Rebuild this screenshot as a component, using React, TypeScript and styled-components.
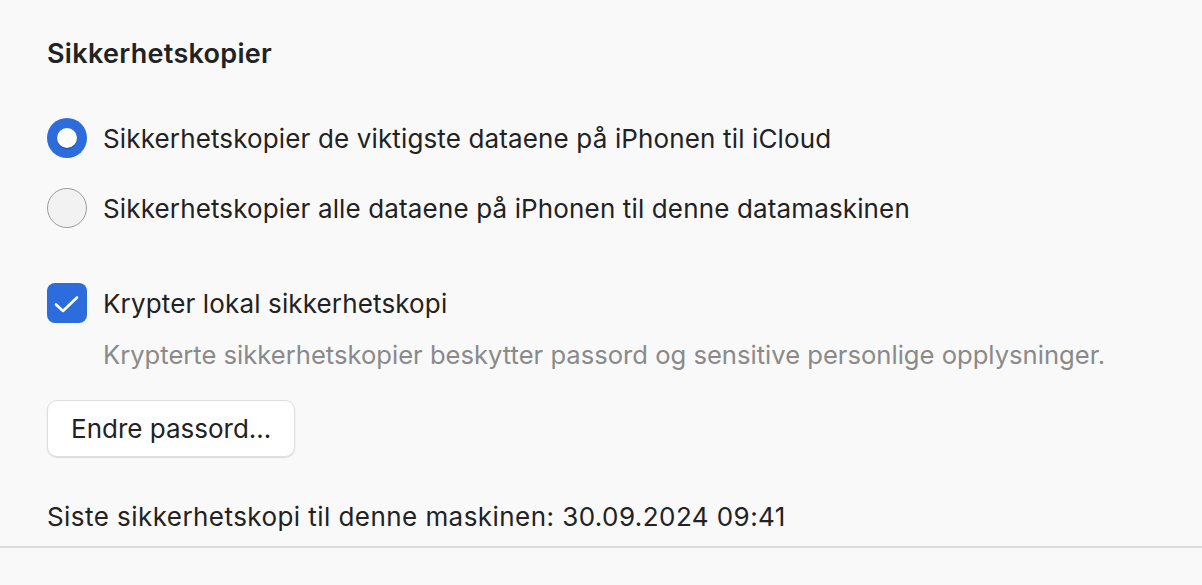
import React, {useState} from 'react';
import styled, {createGlobalStyle} from 'styled-components';

const GlobalStyle = createGlobalStyle`
  html, body {
    margin: 0;
    padding: 0;
    background: #f9f9f9;
  }
  * {
    box-sizing: border-box;
  }
`

const Page = styled.div`
  min-height: 585px;
  background: #f9f9f9;
  font-family: Inter, "Noto Sans", "Liberation Sans", sans-serif;
  color: #222222;
  display: flex;
  flex-direction: column;
`

const Section = styled.section`
  display: flex;
  flex-direction: column;
  align-items: flex-start;
  padding: 39px 47px 0;
`

const Title = styled.h2`
  margin: 0;
  font-size: 27px;
  line-height: 30px;
  font-weight: 600;
  letter-spacing: 0.3px;
`

const RadioGroup = styled.div`
  display: flex;
  flex-direction: column;
  gap: 30px;
  margin-top: 49px;
`

const OptionRow = styled.label`
  display: flex;
  align-items: center;
  gap: 16px;
  height: 40px;
  font-size: 26px;
  letter-spacing: 0.14px;
  cursor: pointer;
`

const RadioDot = styled.span<{checked: boolean}>`
  flex: none;
  width: 40px;
  height: 40px;
  border-radius: 50%;
  display: flex;
  align-items: center;
  justify-content: center;
  background: ${props => props.checked ? '#2c6cdc' : '#f2f2f2'};
  border: ${props => props.checked ? 'none' : '1.5px solid #9c9c9c'};

  &::after {
    content: '';
    width: 20px;
    height: 20px;
    border-radius: 50%;
    background: #fff;
    box-shadow: 0 1px 1px rgba(0, 0, 0, 0.35);
    display: ${props => props.checked ? 'block' : 'none'};
  }
`

const CheckRow = styled(OptionRow)`
  margin-top: 55px;
`

const CheckBox = styled.span<{checked: boolean}>`
  flex: none;
  width: 40px;
  height: 40px;
  border-radius: 8px;
  display: flex;
  align-items: center;
  justify-content: center;
  background: ${props => props.checked ? '#2c6cdc' : '#f2f2f2'};
  border: ${props => props.checked ? 'none' : '1.5px solid #9c9c9c'};
`

const Hint = styled.p`
  margin: 17px 0 0 56px;
  font-size: 25.6px;
  line-height: 30px;
  color: #8a8a8a;
`

const Button = styled.button`
  margin-top: 30px;
  height: 57px;
  padding: 0 23px;
  font-family: inherit;
  font-size: 26px;
  color: #222222;
  background: #ffffff;
  border: 1px solid #dedede;
  border-radius: 10px;
  box-shadow: 0 1px 1.5px rgba(0, 0, 0, 0.12);
  cursor: pointer;
`

const Footer = styled.p`
  margin: 45px 0 0;
  font-size: 26px;
  line-height: 30px;
  letter-spacing: 0.44px;
`

const Divider = styled.hr`
  margin: 14px 0 0;
  border: none;
  height: 2px;
  background: #dadada;
`

const options = [
  'Sikkerhetskopier de viktigste dataene på iPhonen til iCloud',
  'Sikkerhetskopier alle dataene på iPhonen til denne datamaskinen',
]

const App = () => {
  const [selected, setSelected] = useState(0)
  const [encrypt, setEncrypt] = useState(true)

  return (
    <>
      <GlobalStyle />
      <Page>
        <Section>
          <Title>Sikkerhetskopier</Title>
          <RadioGroup>
            {options.map((text, i) => (
              <OptionRow key={text} onClick={() => setSelected(i)}>
                <RadioDot checked={selected === i} />
                {text}
              </OptionRow>
            ))}
          </RadioGroup>
          <CheckRow onClick={() => setEncrypt(prev => !prev)}>
            <CheckBox checked={encrypt}>
              {encrypt && (
                <svg width="39" height="39" viewBox="0 0 39 39">
                  <path d="M8 20.5 L15 27 L29 13.5" fill="none" stroke="#fff" strokeWidth="2.6" strokeLinecap="round" strokeLinejoin="round" />
                </svg>
              )}
            </CheckBox>
            Krypter lokal sikkerhetskopi
          </CheckRow>
          <Hint>Krypterte sikkerhetskopier beskytter passord og sensitive personlige opplysninger.</Hint>
          <Button>Endre passord...</Button>
          <Footer>Siste sikkerhetskopi til denne maskinen: 30.09.2024 09:41</Footer>
        </Section>
        <Divider />
      </Page>
    </>
  );
};

export default App;
